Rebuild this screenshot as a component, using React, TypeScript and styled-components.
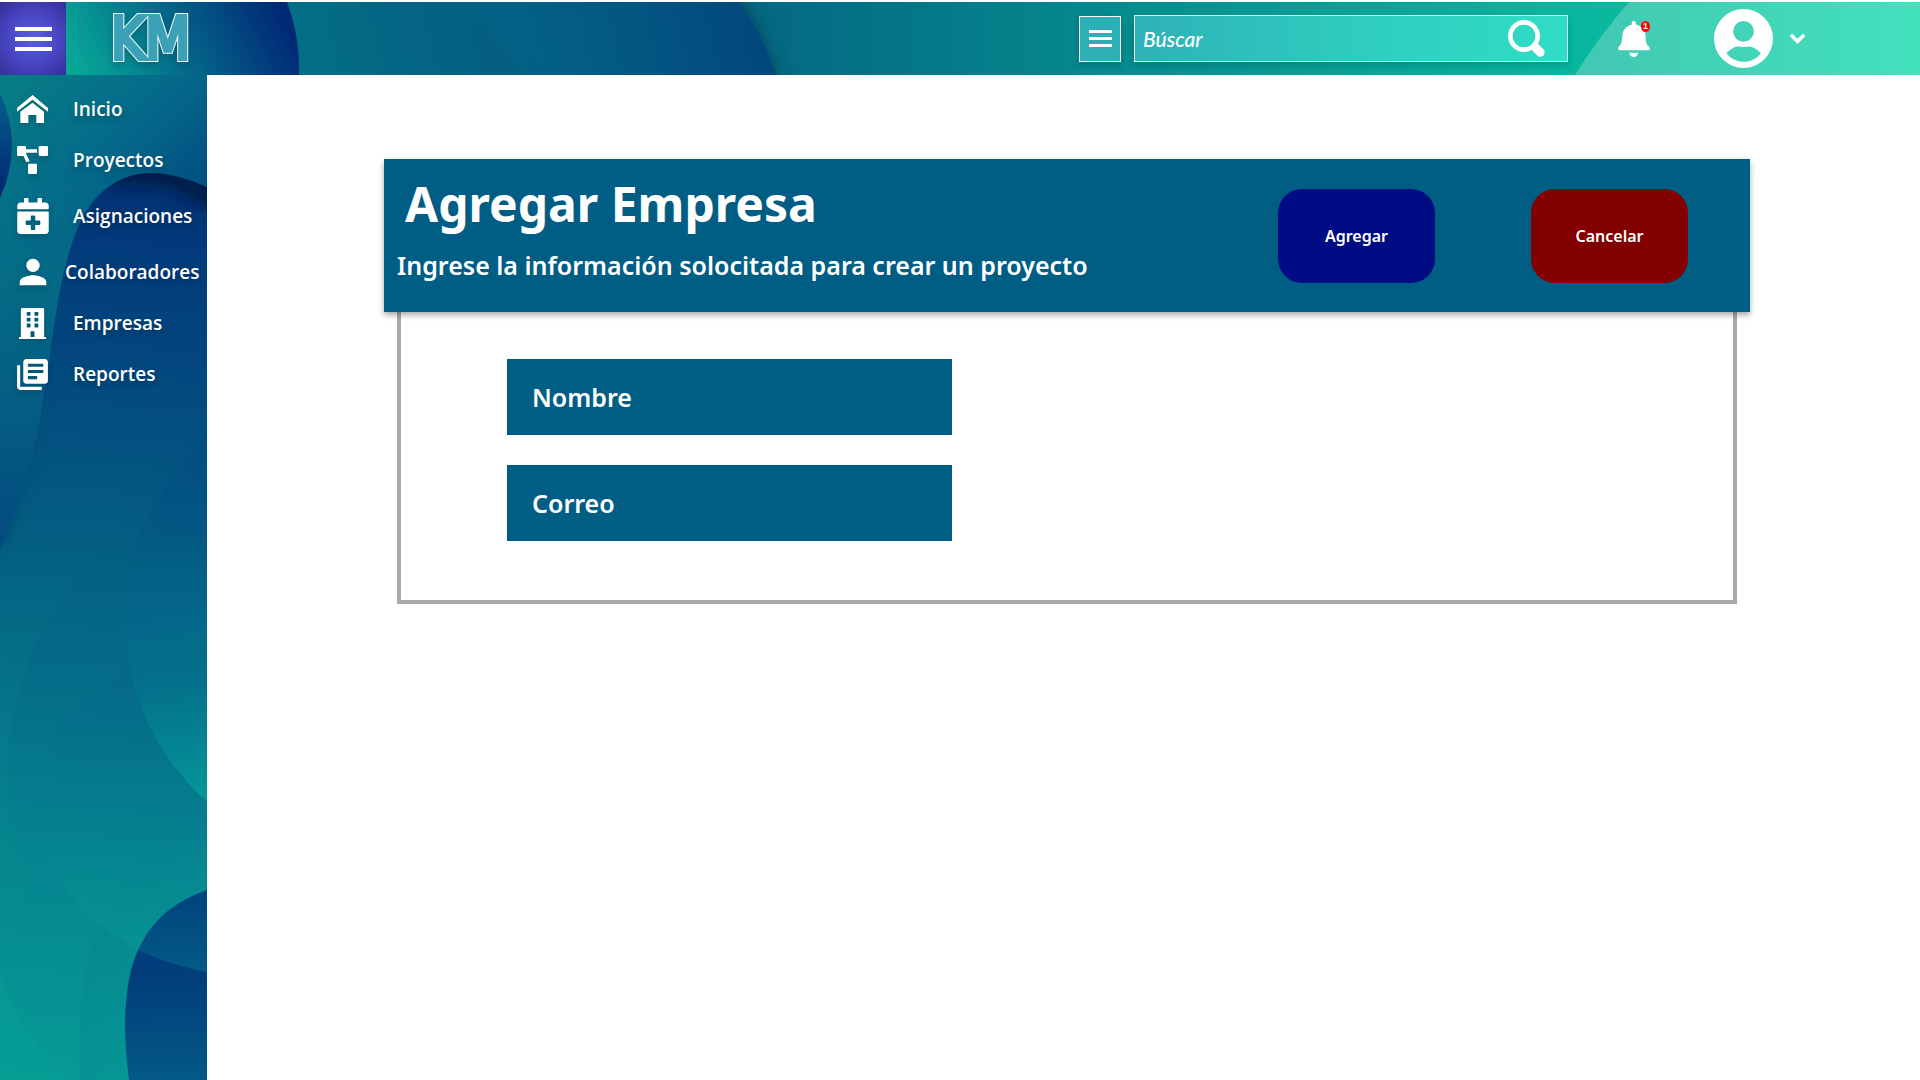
import React from "react";
import styled, { createGlobalStyle } from "styled-components";
import { FaBuilding, FaCalendarPlus } from "react-icons/fa";
import { MdLibraryBooks, MdPerson } from "react-icons/md";

const GlobalStyle = createGlobalStyle`
  *, *::before, *::after { box-sizing: border-box; }
  body {
    margin: 0;
    background: #fff;
    font-family: "Noto Sans", "Open Sans", sans-serif;
  }
`;

const Page = styled.div`
  display: flex;
  flex-direction: column;
  min-height: 100vh;
  padding-top: 2px;
`;

const TopBar = styled.header`
  position: relative;
  isolation: isolate;
  display: flex;
  align-items: center;
  height: 73px;
  padding-right: 115px;
`;

const Backdrop = styled.svg`
  position: absolute;
  inset: 0;
  z-index: -1;
  width: 100%;
  height: 100%;
`;

const MenuButton = styled.button`
  display: grid;
  place-items: center;
  width: 66px;
  height: 100%;
  padding: 0 0 0 1px;
  border: 0;
  background: radial-gradient(circle at center, #5a60e2 0%, #4744c0 55%, #332e96 100%);
  cursor: pointer;
`;

const Brand = styled.a`
  position: relative;
  margin-left: 45px;
  font-family: "DejaVu Sans Condensed", "DejaVu Sans", sans-serif;
  font-size: 58px;
  line-height: 72px;
  text-decoration: none;
  color: #eefafa;
  -webkit-text-stroke: 6px #eefafa;
  filter: drop-shadow(0 3px 3px rgba(0, 0, 0, 0.16));

  &::after {
    content: "KM" / "";
    position: absolute;
    inset: 0;
    color: #3ba1b6;
    -webkit-text-stroke: 4px #3ba1b6;
  }
`;

const Tools = styled.div`
  display: flex;
  align-items: center;
  margin-left: auto;
`;

const FilterButton = styled.button`
  display: grid;
  place-items: center;
  width: 42px;
  height: 46px;
  padding: 0;
  border: 1px solid #fff;
  background: #2cb0b6;
  box-shadow: 0 3px 6px rgba(0, 0, 0, 0.16);
  cursor: pointer;
`;

const SearchBox = styled.form`
  display: flex;
  align-items: center;
  width: 434px;
  height: 47px;
  margin-left: 13px;
  padding: 0 22px 0 8px;
  border: 1px solid #dff7f3;
  background: linear-gradient(90deg, #2eb2b8, #2fd0c0 60%, #30dcc5);
  box-shadow: 0 3px 6px rgba(0, 0, 0, 0.16);
`;

const SearchInput = styled.input`
  flex: 1;
  min-width: 0;
  padding: 0;
  border: 0;
  outline: 0;
  background: transparent;
  color: #fff;
  font: italic 500 21px/28px Lato, "Open Sans", sans-serif;
  &::placeholder { color: #fff; opacity: 1; }
`;

const IconButton = styled.button`
  display: flex;
  align-items: center;
  gap: 17px;
  padding: 0;
  border: 0;
  background: none;
  color: #fff;
  cursor: pointer;
`;

const BellButton = styled(IconButton)`
  position: relative;
  margin: 0 64px 0 50px;
`;

const Badge = styled.span`
  position: absolute;
  top: 0;
  right: 0;
  width: 9px;
  height: 11px;
  border-radius: 50%;
  background: #f00;
  color: #fff;
  font-size: 9px;
  font-weight: 700;
  line-height: 11px;
  text-align: center;
`;

const Body = styled.div`
  display: flex;
  flex: 1;
`;

const Sidebar = styled.nav`
  position: relative;
  isolation: isolate;
  flex: none;
  width: 207px;
  padding-top: 20px;
`;

const NavList = styled.ul`
  display: flex;
  flex-direction: column;
  gap: 23px;
  margin: 0;
  padding: 0;
  list-style: none;
`;

const NavLink = styled.a<{ $tall?: boolean; $long?: boolean }>`
  display: flex;
  align-items: center;
  gap: ${(p) => (p.$long ? 0 : 8)}px;
  height: ${(p) => (p.$tall ? 38 : 28)}px;
  color: #fff;
  font-family: "Open Sans", "Noto Sans", sans-serif;
  font-size: 19px;
  font-weight: 600;
  line-height: 26px;
  text-decoration: none;
  text-shadow: 0 3px 6px rgba(0, 0, 0, 0.25);
`;

const NavIcon = styled.span`
  display: grid;
  place-items: center;
  width: 65px;
  filter: drop-shadow(0 3px 3px rgba(0, 0, 0, 0.16));
`;

const Main = styled.main`
  flex: 1;
  min-width: 0;
  padding: 84px 170px 84px 177px;
`;

const Banner = styled.section`
  position: relative;
  display: flex;
  align-items: center;
  justify-content: space-between;
  height: 153px;
  padding: 0 62px 0 13px;
  background: #005d84;
  box-shadow: 0 3px 6px rgba(0, 0, 0, 0.35);
  color: #fff;
`;

const BannerText = styled.div`
  display: flex;
  flex-direction: column;
  gap: 16px;
  padding-bottom: 13px;
`;

const Heading = styled.h1`
  margin: 0;
  padding-left: 8px;
  font-size: 48px;
  font-weight: 700;
  line-height: 56px;
`;

const Lead = styled.p`
  margin: 0;
  font-size: 25px;
  font-weight: 600;
  line-height: 34px;
`;

const Actions = styled.div`
  display: flex;
  gap: 96px;
`;

const ActionButton = styled.button<{ $tone: string }>`
  width: 157px;
  height: 94px;
  border: 0;
  border-radius: 24px;
  background: ${(p) => p.$tone};
  color: #fff;
  font: 600 16px/22px "Noto Sans", sans-serif;
  cursor: pointer;
`;

const FormPanel = styled.form`
  display: flex;
  flex-direction: column;
  gap: 30px;
  margin: 0 13px;
  padding: 47px 106px 59px;
  border: 4px solid #a9a9a9;
  border-top: 0;
`;

const Field = styled.label`
  display: block;
  width: 445px;
`;

const FieldInput = styled.input`
  display: block;
  width: 100%;
  height: 76px;
  padding: 0 25px;
  border: 0;
  background: #005d84;
  color: #fff;
  font: 600 25px/34px "Noto Sans", sans-serif;
  &::placeholder { color: #fff; opacity: 1; }
`;

function Bars({ width, height, thick }: { width: number; height: number; thick: number }) {
  const mid = (height - thick) / 2;
  return (
    <svg width={width} height={height} fill="#fff" aria-hidden="true">
      <rect width={width} height={thick} />
      <rect y={mid} width={width} height={thick} />
      <rect y={height - thick} width={width} height={thick} />
    </svg>
  );
}

const HomeIcon = () => (
  <svg width="31" height="28" viewBox="0 0 93 84" fill="#fff" aria-hidden="true">
    <path d="M46.500 0 93 39V50L46.500 14 0 50V39Z" />
    <path d="M46.500 23 81 50V84H58V60H34V84H10V50Z" />
  </svg>
);

const FlowIcon = () => (
  <svg width="31" height="28" viewBox="0 0 93 84" fill="#fff" aria-hidden="true">
    <rect width="27" height="30" rx="4" />
    <rect x="65" width="28" height="30" rx="4" />
    <rect x="33" y="53" width="27" height="31" rx="4" />
    <path d="M24 10H60V20H26L38 46 28 49 17 24Z" />
  </svg>
);

const SearchIcon = () => (
  <svg width="37" height="37" viewBox="0 0 111 111" fill="none" stroke="#fff" aria-hidden="true">
    <circle cx="48" cy="48" r="41" strokeWidth="14" />
    <path d="M82 82 97 97" strokeWidth="26" strokeLinecap="round" />
  </svg>
);

const BellIcon = () => (
  <svg width="32" height="36" viewBox="0 0 96 108" fill="#fff" aria-hidden="true">
    <path d="M41 8C41-3 54-3 54 8V11C72 15 82 27 83 44C83 62 84 68 92 76C97 81 97 88 89 88H7C-1 88-1 81 3 76C11 68 12 62 13 44C14 27 24 15 41 11Z" />
    <path d="M34 95H61C59 103 54 108 47 108S36 103 34 95Z" />
  </svg>
);

const AvatarIcon = () => (
  <svg width="59" height="59" viewBox="0 0 176 176" fill="#fff" aria-hidden="true">
    <path
      fillRule="evenodd"
      d="M88 0A88 88 0 1 1 88 176A88 88 0 1 1 88 0ZM88 36A31 31 0 1 0 88 98A31 31 0 1 0 88 36ZM37 131C60 166 118 166 140 131C125 117 112 110 101 112C92 114 84 114 75 112C64 110 52 117 37 131Z"
    />
  </svg>
);

const ChevronIcon = () => (
  <svg width="15" height="10" viewBox="0 0 45 30" fill="none" stroke="#fff" aria-hidden="true">
    <path d="M6 6 22.500 22 39 6" strokeWidth="11" strokeLinecap="round" />
  </svg>
);

const TopBackdrop = () => (
  <Backdrop viewBox="0 0 1920 73" preserveAspectRatio="none" aria-hidden="true">
    <defs>
      <linearGradient id="tBase" gradientUnits="userSpaceOnUse" x1="780" y1="0" x2="1600" y2="0">
        <stop offset="0" stopColor="#046a83" />
        <stop offset="0.4" stopColor="#058a8e" />
        <stop offset="1" stopColor="#08b99e" />
      </linearGradient>
      <linearGradient id="tLight" gradientUnits="userSpaceOnUse" x1="1600" y1="0" x2="1920" y2="0">
        <stop offset="0" stopColor="#42c9b3" />
        <stop offset="1" stopColor="#42e2bd" />
      </linearGradient>
      <linearGradient id="tWide" gradientUnits="userSpaceOnUse" x1="420" y1="73" x2="750" y2="0">
        <stop offset="0" stopColor="#06688a" />
        <stop offset="0.5" stopColor="#035c84" />
        <stop offset="1" stopColor="#02487d" />
      </linearGradient>
      <linearGradient id="tMid" gradientUnits="userSpaceOnUse" x1="290" y1="50" x2="480" y2="0">
        <stop offset="0" stopColor="#046f87" />
        <stop offset="1" stopColor="#045f82" />
      </linearGradient>
      <linearGradient id="tLeft" gradientUnits="userSpaceOnUse" x1="90" y1="90" x2="275" y2="0">
        <stop offset="0" stopColor="#08a697" />
        <stop offset="0.5" stopColor="#04668a" />
        <stop offset="1" stopColor="#012976" />
      </linearGradient>
      <filter id="tBlur" x="-20%" y="-50%" width="140%" height="200%">
        <feGaussianBlur stdDeviation="9" />
      </filter>
    </defs>
    <rect width="1920" height="73" fill="url(#tBase)" />
    <path d="M1629 0Q1598 36 1575 73H1920V0Z" fill="url(#tLight)" />
    <path d="M0-30H718Q766 20 783 110H0Z" fill="#003c4c" opacity="0.8" filter="url(#tBlur)" />
    <path d="M0 0H739Q764 34 776 73H0Z" fill="url(#tWide)" />
    <path d="M0-30H425Q490 10 540 110H0Z" fill="#035f74" opacity="0.5" filter="url(#tBlur)" />
    <path d="M0 0H452Q497 28 521 73H0Z" fill="url(#tMid)" />
    <path d="M0 0H287Q300 34 299 73H0Z" fill="url(#tLeft)" />
  </Backdrop>
);

const SideBackdrop = () => (
  <Backdrop viewBox="0 75 207 1005" preserveAspectRatio="none" aria-hidden="true">
    <defs>
      <linearGradient id="sTop" gradientUnits="userSpaceOnUse" x1="20" y1="80" x2="170" y2="230">
        <stop offset="0" stopColor="#077c86" />
        <stop offset="0.55" stopColor="#04688a" />
        <stop offset="1" stopColor="#024c80" />
      </linearGradient>
      <linearGradient id="sEdge" gradientUnits="userSpaceOnUse" x1="0" y1="190" x2="50" y2="540">
        <stop offset="0" stopColor="#057588" />
        <stop offset="0.65" stopColor="#045c83" />
        <stop offset="1" stopColor="#034a7f" />
      </linearGradient>
      <linearGradient id="sFade" gradientUnits="userSpaceOnUse" x1="0" y1="170" x2="0" y2="280">
        <stop offset="0" stopColor="#fff" stopOpacity="0" />
        <stop offset="1" stopColor="#fff" />
      </linearGradient>
      <mask id="sMask">
        <rect y="75" width="207" height="1005" fill="url(#sFade)" />
      </mask>
      <linearGradient id="sBody" gradientUnits="userSpaceOnUse" x1="130" y1="173" x2="60" y2="1080">
        <stop offset="0" stopColor="#013072" />
        <stop offset="0.07" stopColor="#02397a" />
        <stop offset="0.26" stopColor="#034d80" />
        <stop offset="0.42" stopColor="#046083" />
        <stop offset="0.56" stopColor="#046c88" />
        <stop offset="0.68" stopColor="#057b8e" />
        <stop offset="0.82" stopColor="#058b91" />
        <stop offset="1" stopColor="#069a95" />
      </linearGradient>
      <linearGradient id="sBall" gradientUnits="userSpaceOnUse" x1="150" y1="560" x2="180" y2="800">
        <stop offset="0" stopColor="#046085" stopOpacity="0" />
        <stop offset="0.2" stopColor="#04648a" />
        <stop offset="0.5" stopColor="#04738b" />
        <stop offset="1" stopColor="#039699" />
      </linearGradient>
      <linearGradient id="sUpper" gradientUnits="userSpaceOnUse" x1="180" y1="430" x2="170" y2="600">
        <stop offset="0" stopColor="#02477f" stopOpacity="0.5" />
        <stop offset="0.6" stopColor="#025584" stopOpacity="0.6" />
        <stop offset="1" stopColor="#046085" stopOpacity="0" />
      </linearGradient>
      <linearGradient id="sRim" gradientUnits="userSpaceOnUse" x1="0" y1="550" x2="0" y2="740">
        <stop offset="0" stopColor="#078f86" stopOpacity="0" />
        <stop offset="1" stopColor="#078f86" stopOpacity="0.4" />
      </linearGradient>
      <linearGradient id="sHaze" gradientUnits="userSpaceOnUse" x1="0" y1="650" x2="0" y2="790">
        <stop offset="0" stopColor="#04588a" stopOpacity="0.16" />
        <stop offset="1" stopColor="#04588a" stopOpacity="0" />
      </linearGradient>
      <linearGradient id="sRight" gradientUnits="userSpaceOnUse" x1="80" y1="0" x2="190" y2="0">
        <stop offset="0" stopColor="#04748b" stopOpacity="0.16" />
        <stop offset="1" stopColor="#04748b" stopOpacity="0" />
      </linearGradient>
      <linearGradient id="sDot" gradientUnits="userSpaceOnUse" x1="0" y1="93" x2="0" y2="198">
        <stop offset="0" stopColor="#04608a" />
        <stop offset="1" stopColor="#012472" />
      </linearGradient>
      <linearGradient id="sFoot" gradientUnits="userSpaceOnUse" x1="170" y1="900" x2="175" y2="1080">
        <stop offset="0" stopColor="#003579" />
        <stop offset="0.45" stopColor="#013f7c" />
        <stop offset="1" stopColor="#035985" />
      </linearGradient>
      <linearGradient id="sLens" gradientUnits="userSpaceOnUse" x1="120" y1="830" x2="130" y2="970">
        <stop offset="0" stopColor="#08a89c" stopOpacity="0" />
        <stop offset="1" stopColor="#08a89c" stopOpacity="0.26" />
      </linearGradient>
      <filter id="sBlur" x="-20%" y="-20%" width="140%" height="140%">
        <feGaussianBlur stdDeviation="9" />
      </filter>
      <filter id="sSoft" x="-50%" y="-20%" width="200%" height="140%">
        <feGaussianBlur stdDeviation="4" />
      </filter>
      <clipPath id="sArch">
        <path d="M207 187C181 176 166 173 150 173C115 174 92 196 79 225C57 275 52 350 43 400C36 450 22 502 0 550V1080H207Z" />
      </clipPath>
    </defs>
    <rect y="75" width="207" height="1005" fill="url(#sTop)" />
    <rect y="75" width="207" height="500" fill="url(#sEdge)" mask="url(#sMask)" />
    <path d="M0 93Q24 145 0 198Z" fill="url(#sDot)" />
    <g clipPath="url(#sArch)">
      <rect y="75" width="207" height="1005" fill="url(#sBody)" />
      <path d="M112 177Q165 158 220 205" stroke="#001436" strokeWidth="20" fill="none" opacity="0.85" filter="url(#sBlur)" />
      <path d="M43 400C36 450 22 502 0 550" stroke="#02506e" strokeWidth="8" fill="none" opacity="0.6" filter="url(#sSoft)" />
      <path d="M0 540H110C55 600 18 660 9 740C4 800 14 840 30 880L0 973Z" fill="url(#sRim)" opacity="0.5" />
      <path d="M207 435C175 468 135 520 123 600H207Z" fill="url(#sUpper)" />
      <path d="M126 560C118 640 128 730 207 802V560Z" fill="url(#sBall)" />
      <path d="M207 650C145 654 90 685 50 740V800H207Z" fill="url(#sHaze)" />
      <path d="M207 812C120 850 72 935 80 1080H207Z" fill="url(#sRight)" />
      <path d="M0 973C12 1010 36 1045 66 1080H0Z" fill="#08a898" opacity="0.25" />
      <path d="M207 890C165 905 142 930 131 970C123 1005 124 1040 129 1080H207Z" fill="url(#sFoot)" />
      <path d="M43 855C80 920 130 958 207 972V780H43Z" fill="url(#sLens)" />
    </g>
  </Backdrop>
);

type NavEntry = { label: string; icon: React.ReactNode; tall?: boolean; long?: boolean };

const navEntries: NavEntry[] = [
  { label: "Inicio", icon: <HomeIcon /> },
  { label: "Proyectos", icon: <FlowIcon /> },
  { label: "Asignaciones", icon: <FaCalendarPlus size={36} />, tall: true },
  { label: "Colaboradores", icon: <MdPerson size={40} />, long: true },
  { label: "Empresas", icon: <FaBuilding size={31} /> },
  { label: "Reportes", icon: <MdLibraryBooks size={37} /> },
];

export default function App() {
  return (
    <>
      <GlobalStyle />
      <Page>
        <TopBar>
          <TopBackdrop />
          <MenuButton type="button" aria-label="Menú">
            <Bars width={37} height={24} thick={4} />
          </MenuButton>
          <Brand href="#">KM</Brand>
          <Tools>
            <FilterButton type="button" aria-label="Filtros">
              <Bars width={23} height={17} thick={3} />
            </FilterButton>
            <SearchBox role="search">
              <SearchInput type="text" placeholder="Búscar" aria-label="Búscar" />
              <IconButton type="button" aria-label="Buscar">
                <SearchIcon />
              </IconButton>
            </SearchBox>
            <BellButton type="button" aria-label="Notificaciones">
              <BellIcon />
              <Badge>1</Badge>
            </BellButton>
            <IconButton type="button" aria-label="Cuenta">
              <AvatarIcon />
              <ChevronIcon />
            </IconButton>
          </Tools>
        </TopBar>
        <Body>
          <Sidebar>
            <SideBackdrop />
            <NavList>
              {navEntries.map((entry) => (
                <li key={entry.label}>
                  <NavLink href="#" $tall={entry.tall} $long={entry.long}>
                    <NavIcon>{entry.icon}</NavIcon>
                    {entry.label}
                  </NavLink>
                </li>
              ))}
            </NavList>
          </Sidebar>
          <Main>
            <Banner>
              <BannerText>
                <Heading>Agregar Empresa</Heading>
                <Lead>Ingrese la información solocitada para crear un proyecto</Lead>
              </BannerText>
              <Actions>
                <ActionButton type="submit" form="empresa" $tone="#000c83">
                  Agregar
                </ActionButton>
                <ActionButton type="button" $tone="#830000">
                  Cancelar
                </ActionButton>
              </Actions>
            </Banner>
            <FormPanel id="empresa">
              <Field>
                <FieldInput type="text" name="nombre" placeholder="Nombre" aria-label="Nombre" />
              </Field>
              <Field>
                <FieldInput type="email" name="correo" placeholder="Correo" aria-label="Correo" />
              </Field>
            </FormPanel>
          </Main>
        </Body>
      </Page>
    </>
  );
}
